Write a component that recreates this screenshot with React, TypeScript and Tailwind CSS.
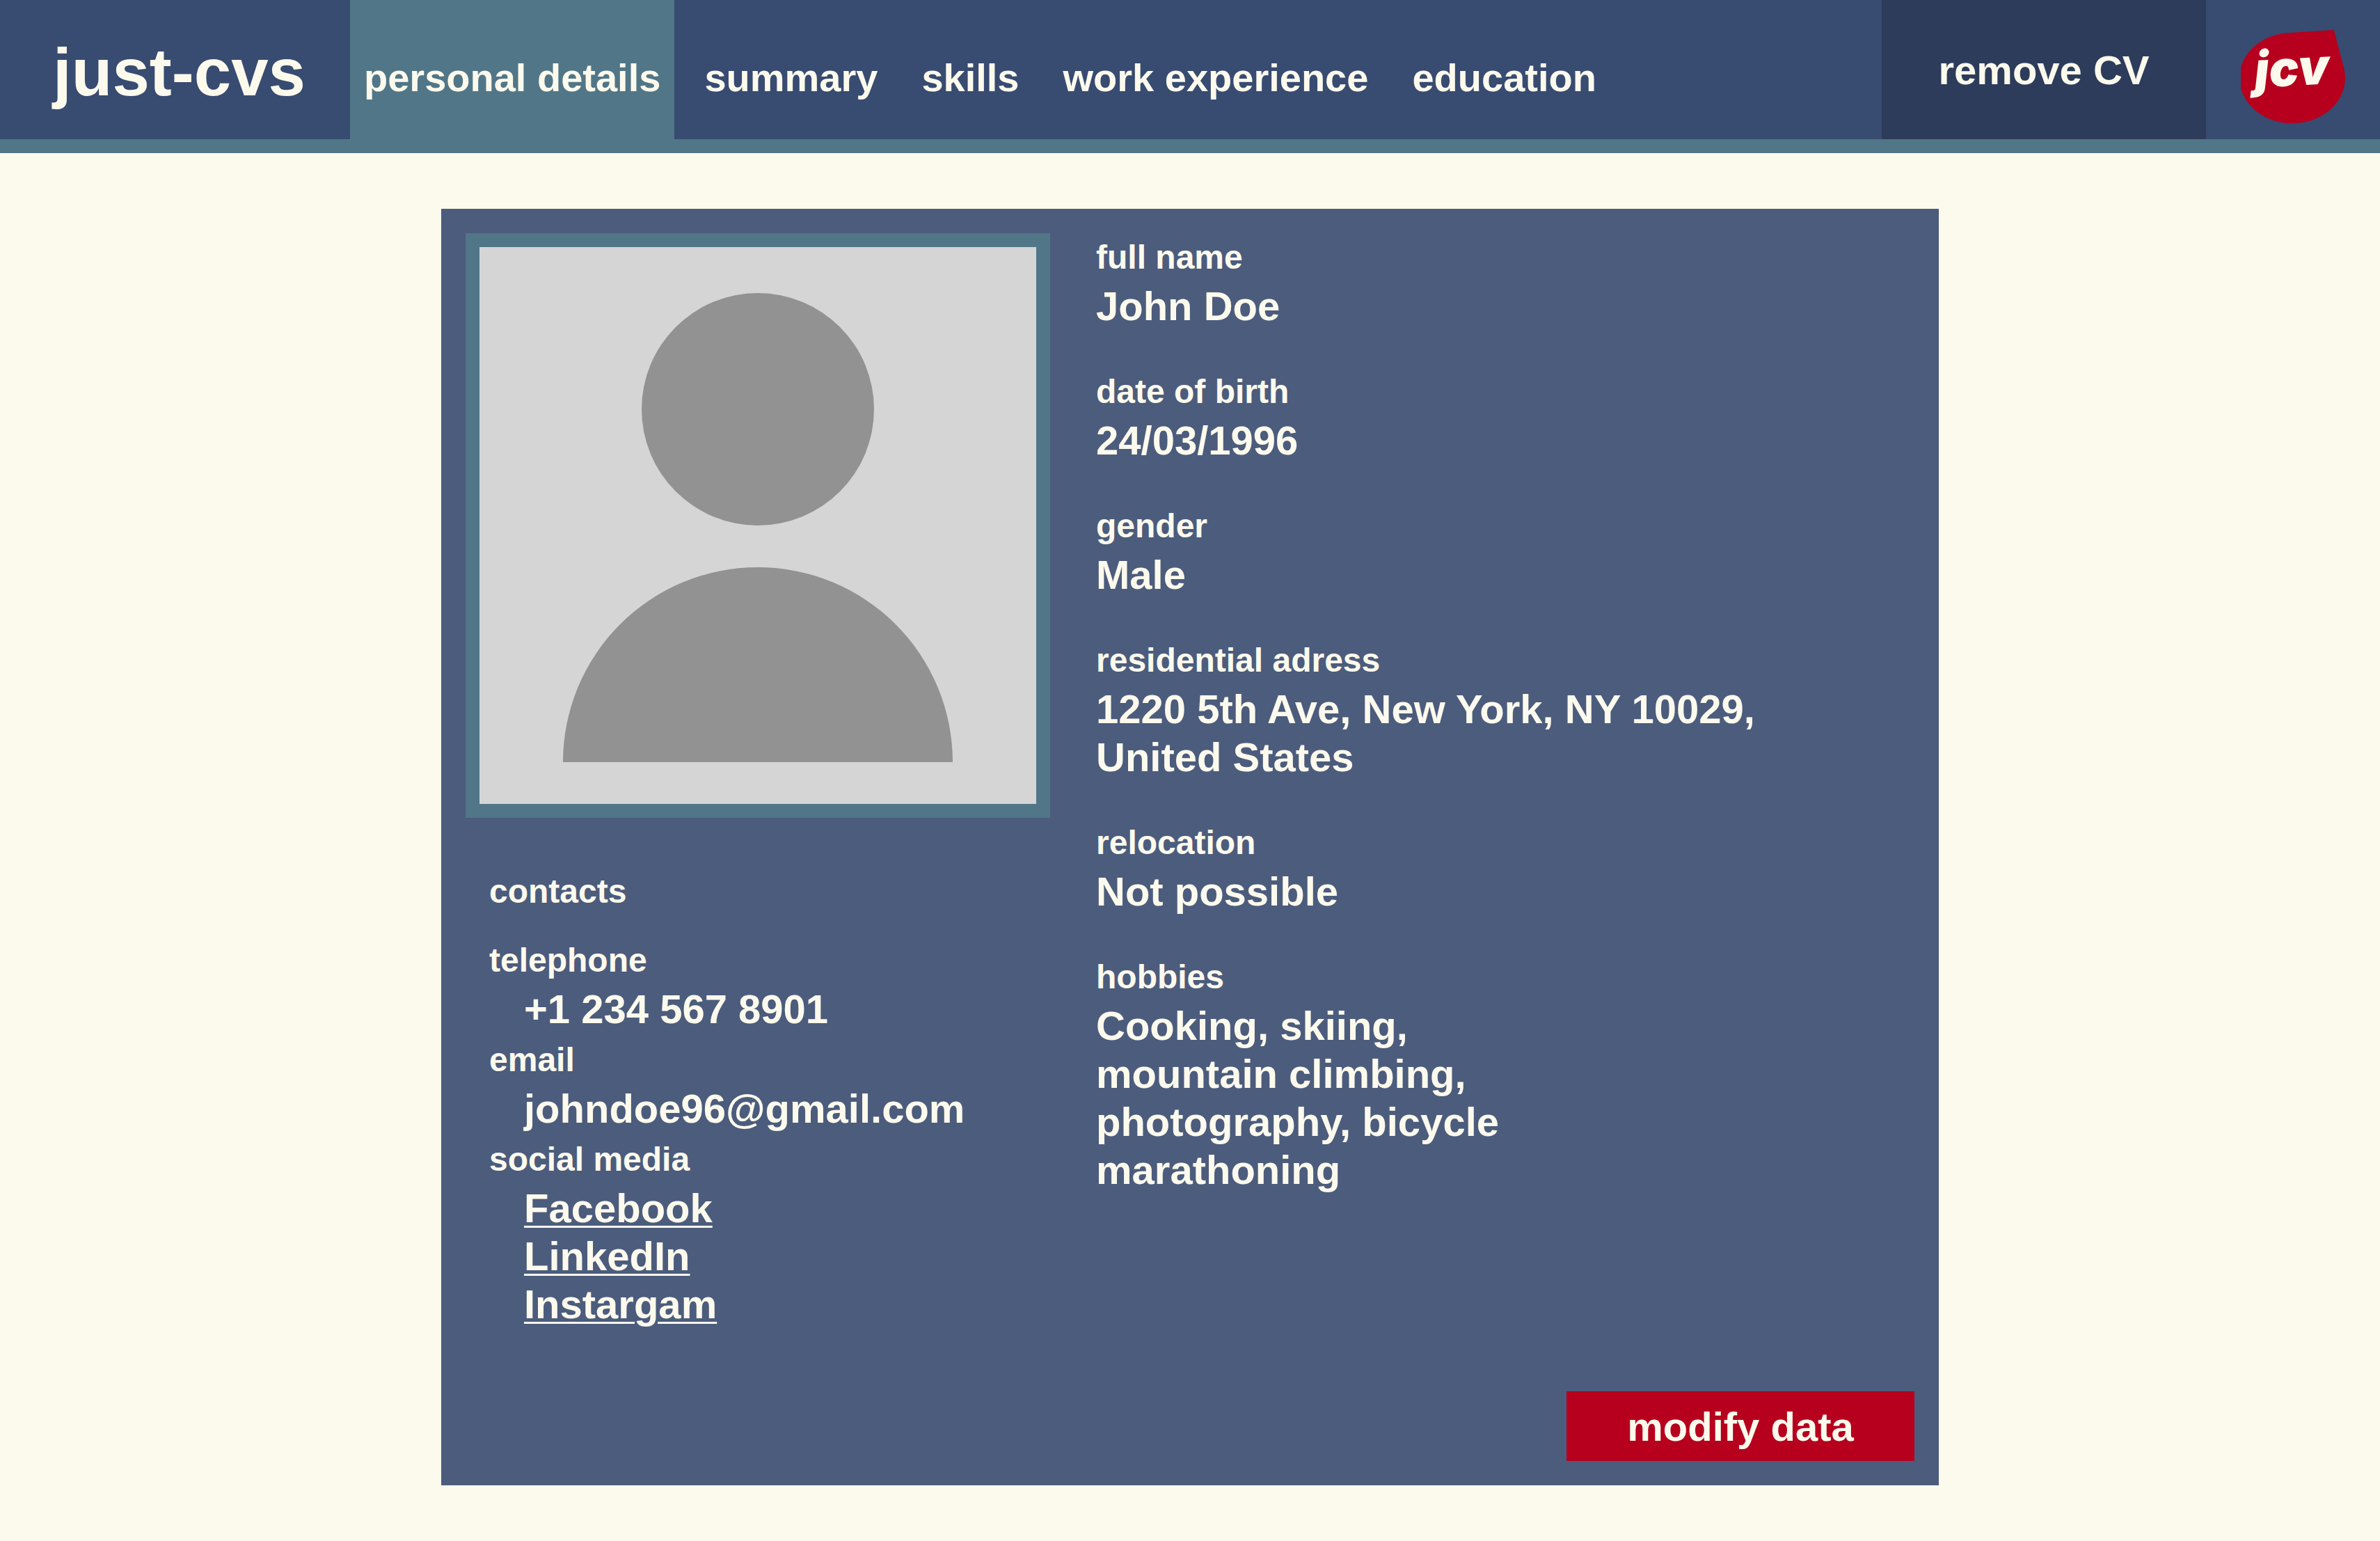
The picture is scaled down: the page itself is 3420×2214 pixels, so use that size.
import React from "react";

type NavItem = { label: string; active?: boolean };

const navItems: NavItem[] = [
  { label: "personal details", active: true },
  { label: "summary" },
  { label: "skills" },
  { label: "work experience" },
  { label: "education" },
];

const details = [
  { label: "full name", value: "John Doe" },
  { label: "date of birth", value: "24/03/1996" },
  { label: "gender", value: "Male" },
  {
    label: "residential adress",
    value: "1220 5th Ave, New York, NY 10029, United States",
  },
  { label: "relocation", value: "Not possible" },
  {
    label: "hobbies",
    value: "Cooking, skiing, mountain climbing, photography, bicycle marathoning",
    narrow: true,
  },
];

const socials = ["Facebook", "LinkedIn", "Instargam"];

function Logo() {
  return (
    <a href="#home" aria-label="just-cvs home" className="block">
      <svg
        viewBox="0 0 150 134"
        className="block w-[150px] h-[134px]"
        aria-hidden="true"
      >
        <path
          d="M64 4.5 L133.7 0 L148.3 55.3 A75 65 0 0 1 75 134 A75 65 0 0 1 64 4.5Z"
          fill="#b6001e"
        />
        <text
          x="20"
          y="80"
          transform="rotate(-3 75 67)"
          fontFamily="Inter, 'Liberation Sans', sans-serif"
          fontSize="71"
          fontWeight="900"
          fontStyle="italic"
          fill="#fcfaed"
        >
          jcv
        </text>
      </svg>
    </a>
  );
}

function Header() {
  return (
    <header className="flex h-[220px] border-b-[20px] border-[#517687] bg-[#384b71]">
      <h1 className="flex w-[503px] shrink-0 items-center justify-center pt-2 pl-3 text-[96px] leading-[116px]">
        just-cvs
      </h1>
      <nav className="flex gap-[23px]">
        {navItems.map((item) => (
          <a
            key={item.label}
            href={"#" + item.label.replace(" ", "-")}
            aria-current={item.active ? "page" : undefined}
            className={
              item.active
                ? "flex items-center whitespace-nowrap bg-[#517687] px-5 pt-6 text-[56px] leading-[68px]"
                : "flex items-center whitespace-nowrap px-5 pt-6 text-[56px] leading-[68px]"
            }
          >
            {item.label}
          </a>
        ))}
      </nav>
      <button
        type="button"
        className="ml-auto w-[466px] shrink-0 bg-[#2d3c5a] text-[58px] leading-[69px] font-bold"
      >
        remove CV
      </button>
      <div className="flex w-[250px] shrink-0 items-center justify-center pt-5">
        <Logo />
      </div>
    </header>
  );
}

function Portrait() {
  return (
    <svg
      viewBox="0 0 800 800"
      role="img"
      aria-label="Profile photo placeholder"
      className="block aspect-square w-[840px] border-[20px] border-[#517687] bg-[#d5d5d5]"
    >
      <circle cx="400" cy="233" r="167" fill="#929292" />
      <path d="M120 740a280 280 0 0 1 560 0Z" fill="#929292" />
    </svg>
  );
}

function Contacts() {
  return (
    <section className="px-[34px] pt-[77px]">
      <h2 className="pb-[41px] text-[48px] leading-[58px]">contacts</h2>
      <dl className="flex flex-col gap-[10px]">
        <div className="flex flex-col gap-[6px]">
          <dt className="text-[48px] leading-[58px]">telephone</dt>
          <dd className="pl-[50px] text-[58px] leading-[69px]">
            +1 234 567 8901
          </dd>
        </div>
        <div className="flex flex-col gap-[6px]">
          <dt className="text-[48px] leading-[58px]">email</dt>
          <dd className="pl-[50px] text-[58px] leading-[69px]">
            johndoe96@gmail.com
          </dd>
        </div>
        <div className="flex flex-col gap-[6px]">
          <dt className="text-[48px] leading-[58px]">social media</dt>
          <dd className="flex flex-col items-start pl-[50px] text-[58px] leading-[69px]">
            {socials.map((name) => (
              <a
                key={name}
                href={"#" + name.toLowerCase()}
                className="underline decoration-[3px] underline-offset-[5px]"
              >
                {name}
              </a>
            ))}
          </dd>
        </div>
      </dl>
    </section>
  );
}

export default function App() {
  return (
    <div className="min-h-screen bg-[#fcfaed] font-['Liberation_Sans',Arial,sans-serif] font-bold text-[#fcfaed]">
      <Header />
      <main className="px-20 py-20">
        <article className="mx-auto flex w-full max-w-[2152px] flex-col bg-[#4c5c7d] p-[35px]">
          <div className="flex items-start gap-[66px]">
            <div className="shrink-0">
              <Portrait />
              <Contacts />
            </div>
            <dl className="flex max-w-[1000px] flex-1 flex-col gap-[60px] pt-[6px]">
              {details.map((d) => (
                <div key={d.label} className="flex flex-col gap-[6px]">
                  <dt className="text-[48px] leading-[58px]">{d.label}</dt>
                  <dd
                    className={
                      d.narrow
                        ? "max-w-[600px] text-[58px] leading-[69px]"
                        : "text-[58px] leading-[69px]"
                    }
                  >
                    {d.value}
                  </dd>
                </div>
              ))}
            </dl>
          </div>
          <button
            type="button"
            className="mt-[91px] h-[100px] w-[500px] self-end bg-[#b6001e] text-[58px] leading-[69px] font-bold"
          >
            modify data
          </button>
        </article>
      </main>
    </div>
  );
}
